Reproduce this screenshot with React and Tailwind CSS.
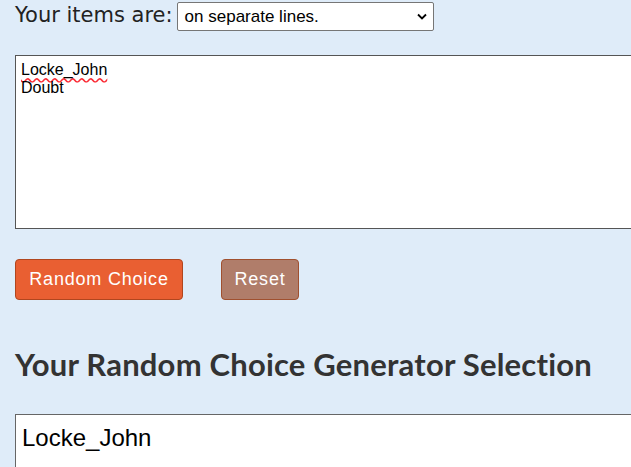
import React from 'react';

const App = () => {
  return (
    <div className="h-[467px] w-[631px] overflow-hidden bg-[#dfecf9] pl-[15px]">
      <div className="flex items-center h-[32px]">
        <span className="font-['DejaVu_Sans'] text-[21px] text-[#222]">Your items are:</span>
        <div className="ml-[4px] mt-[1px] flex h-[29px] w-[257px] shrink-0 items-center justify-between rounded-[2px] border border-[#767676] bg-white pl-[7px] pr-[6px] font-['Liberation_Sans'] text-[17px] text-black">
          <span>on separate lines.</span>
          <svg width="10" height="7" viewBox="0 0 10 7">
            <path d="M1 1.5 L5 5.5 L9 1.5" stroke="#000" strokeWidth="1.8" fill="none" />
          </svg>
        </div>
      </div>

      <div className="mt-[23px] h-[174px] w-[640px] border border-[#555] bg-white px-[5px] pt-[5px] font-['Liberation_Sans'] text-[16px] leading-[18px] text-black">
        <div>
          <span className="underline decoration-wavy decoration-red-500 underline-offset-2">Locke_John</span>
        </div>
        <div>Doubt</div>
      </div>

      <div className="mt-[30px] flex gap-[38px]">
        <button className="h-[41px] w-[168px] rounded-[4px] border border-[#b0461f] bg-[#e95f32] font-['Liberation_Sans'] text-[18px] tracking-[0.8px] text-white">
          Random Choice
        </button>
        <button className="h-[41px] w-[78px] rounded-[4px] border border-[#a0502f] bg-[#b07d6a] font-['Liberation_Sans'] text-[18px] tracking-[0.8px] text-white">
          Reset
        </button>
      </div>

      <h2 className="mt-[46px] whitespace-nowrap font-['Lato'] text-[31px] font-bold leading-[36px] tracking-[0.2px] text-[#333]">
        Your Random Choice Generator Selection
      </h2>

      <div className="mt-[32px] h-[80px] w-[640px] border border-[#666] bg-white px-[6px] pt-[5px] font-['Liberation_Sans'] text-[24px] text-black">
        Locke_John
      </div>
    </div>
  );
};

export default App;
